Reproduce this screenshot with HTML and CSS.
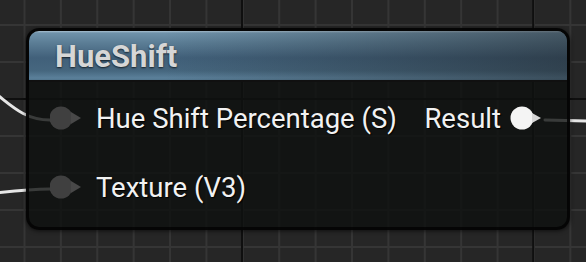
FILE: index.html
```html
<!DOCTYPE html>
<html lang="en">
<head>
	<meta charset="UTF-8">
	<meta name="viewport" content="width=device-width, initial-scale=1.0">
	<title>HueShift</title>
	<link rel="stylesheet" href="styles.css">
</head>
<body>
	<div class="graph">
		<svg class="wires" width="586" height="262" viewBox="0 0 586 262">
			<path d="M -40 76 C 0 84, 10 120, 50 120" />
			<path d="M -60 198 C -20 197, 10 189, 50 189" />
			<path d="M 545 120 L 590 121" />
		</svg>
		<div class="node">
			<div class="header">
				<span class="title">HueShift</span>
			</div>
			<div class="pins">
				<div class="inputs">
					<div class="row">
						<svg class="pin" width="34" height="26" viewBox="0 0 34 26">
							<circle cx="11" cy="13" r="11.5" class="dot" />
							<polygon points="21,7 31,13 21,19" class="arrow" />
						</svg>
						<span class="label">Hue Shift Percentage (S)</span>
					</div>
					<div class="row">
						<svg class="pin" width="34" height="26" viewBox="0 0 34 26">
							<circle cx="11" cy="13" r="11.5" class="dot" />
							<polygon points="21,7 31,13 21,19" class="arrow" />
						</svg>
						<span class="label">Texture (V3)</span>
					</div>
				</div>
				<div class="outputs">
					<div class="row">
						<span class="label">Result</span>
						<svg class="pin linked" width="34" height="26" viewBox="0 0 34 26">
							<circle cx="12" cy="13" r="11.5" class="dot" />
							<polygon points="22,8 31,13 22,18" class="arrow" />
						</svg>
					</div>
				</div>
			</div>
		</div>
	</div>
</body>
</html>
```

FILE: styles.css
```css
html, body {
	margin:0;
	padding:0;
}
* {
	box-sizing: border-box;
}
body {
	width: 586px;
	height: 262px;
	overflow: hidden;
	font-family: Roboto, "Liberation Sans", sans-serif;
	background-color: #262626;
	background-image:
		linear-gradient(to right, #0f0f0f 2px, transparent 2px),
		linear-gradient(to bottom, #0f0f0f 2px, transparent 2px),
		linear-gradient(to right, #353535 2px, transparent 2px),
		linear-gradient(to bottom, #353535 2px, transparent 2px);
	background-size:
		291.2px 100%,
		100% 296px,
		36.4px 100%,
		100% 37px;
	background-position:
		241px 0,
		0 98px,
		23.5px 0,
		0 24px;
}
.graph {
	position: relative;
	width: 586px;
	height: 262px;
}
.wires {
	position: absolute;
	top: 0;
	left: 0;
}
.wires path {
	fill: none;
	stroke: #e6e6e6;
	stroke-width: 3;
	stroke-linecap: round;
}
.node {
	position: absolute;
	left: 26px;
	top: 28px;
	width: 544px;
	height: 202px;
	border: 3px solid rgba(4, 4, 4, 0.9);
	border-radius: 13px;
	background-color: rgba(14, 16, 15, 0.8);
	box-shadow: 0 1px 4px rgba(0, 0, 0, 0.6);
	display: flex;
	flex-direction: column;
}
.header {
	height: 51px;
	border-radius: 10px 10px 0 0;
	display: flex;
	align-items: center;
	padding-left: 26px;
	border-bottom: 2px solid #101010;
	background-image:
		linear-gradient(to right, rgba(0, 0, 0, 0) 25%, rgba(28, 30, 32, 0.5) 100%),
		linear-gradient(to bottom, #a8c0d0 0, #6f92aa 2px, #5b7d95 12px, #41607a 27px, #46677f 40px, #5b809a 47px, #52758e 49px);
}
.title {
	font-size: 31px;
	font-weight: 700;
	color: #d6d6d6;
	text-shadow: 0 1px 2px rgba(0, 0, 0, 0.7);
	margin-top: 1px;
}
.pins {
	flex: 1;
	display: flex;
	justify-content: space-between;
	padding: 16px 23px 0 21px;
}
.inputs, .outputs {
	display: flex;
	flex-direction: column;
	gap: 29px;
}
.row {
	height: 40px;
	display: flex;
	align-items: center;
}
.inputs .row {
	gap: 12px;
}
.outputs .row {
	gap: 9px;
}
.label {
	font-size: 27.5px;
	color: #f2f2f2;
	text-shadow: 1px 1px 1px #000;
}
.pin .dot {
	fill: #404040;
}
.pin .arrow {
	fill: #484848;
}
.pin.linked .dot {
	fill: #f4f4f4;
}
.pin.linked .arrow {
	fill: #d6d6d6;
}
```
